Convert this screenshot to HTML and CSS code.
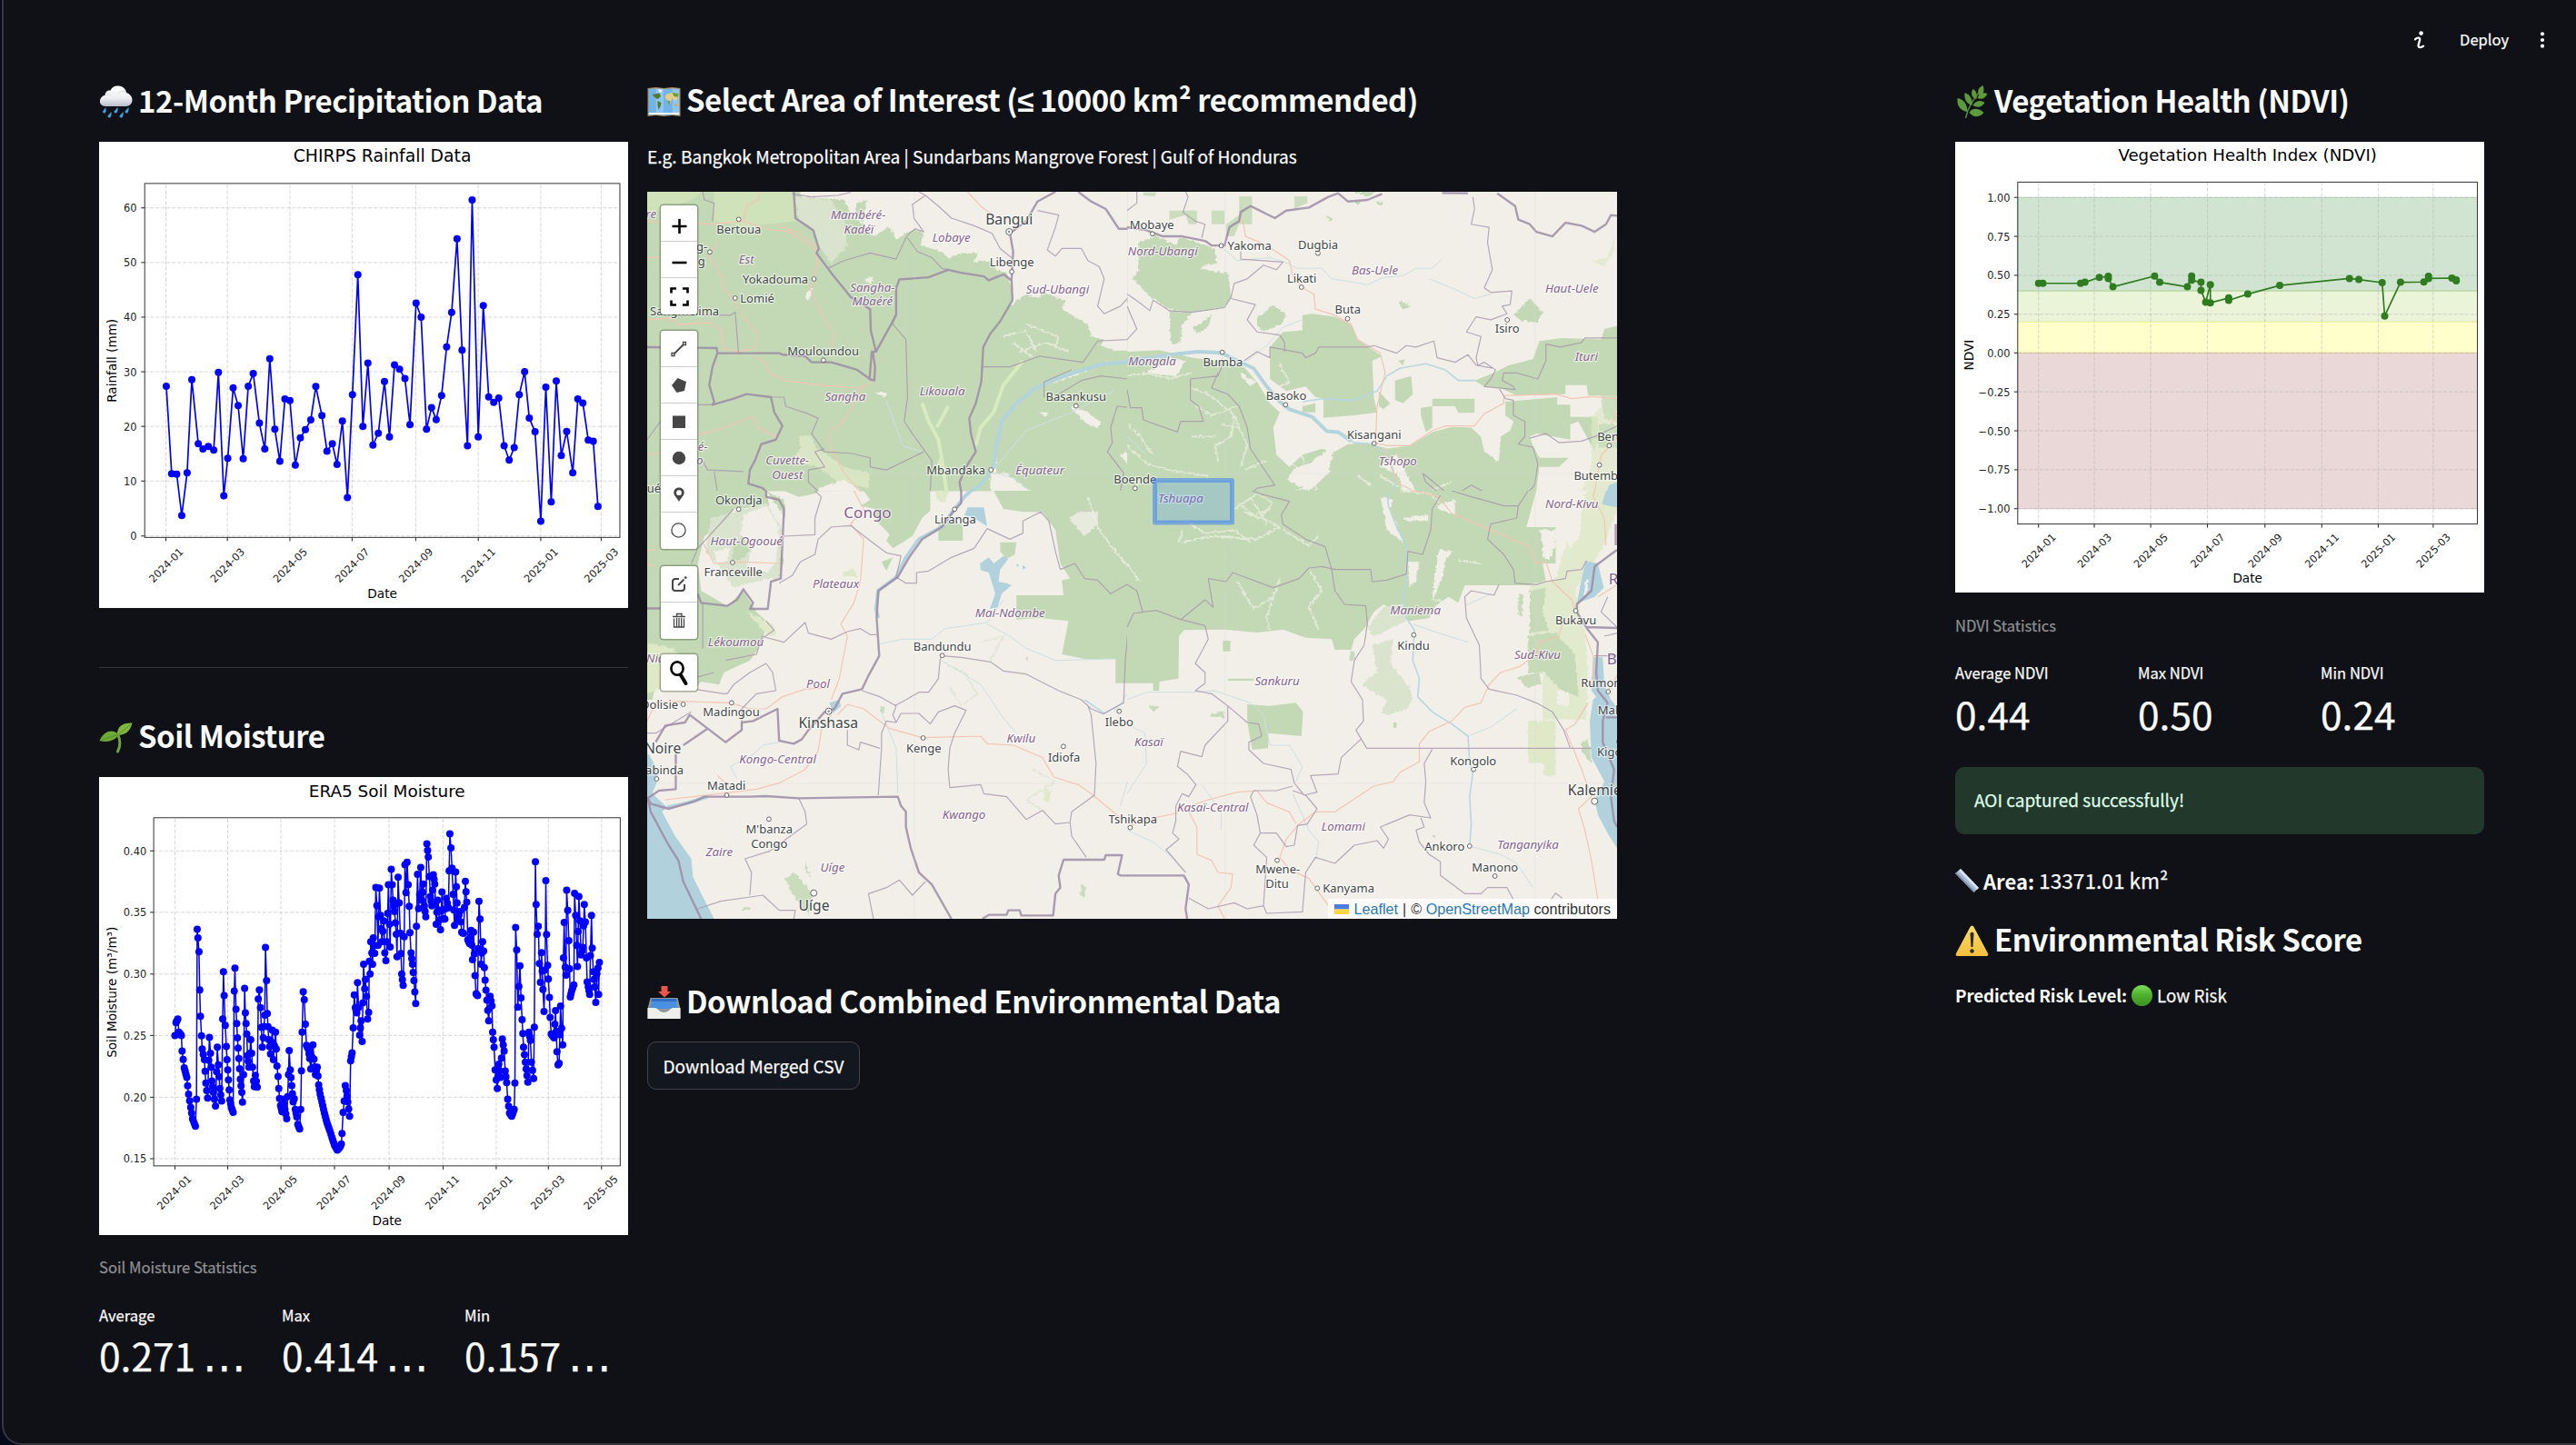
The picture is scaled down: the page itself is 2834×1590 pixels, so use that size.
FILE: index.html
```html
<!DOCTYPE html>
<html lang="en">
<head>
<meta charset="utf-8">
<title>Environmental Dashboard</title>
<link rel="stylesheet" href="styles.css">
</head>
<body>
<div class="window">
<header class="toolbar">
  <svg class="info" viewBox="0 0 12 20"><circle cx="7.6" cy="2.6" r="2.3"/><path d="M1 9.2C3 7.6 6.6 6.6 6.2 9.6C5.8 12 4.4 14.6 4.6 16.6C4.9 18.9 8 18.2 10 16.8"/></svg>
  <span class="deploy">Deploy</span>
  <svg class="dots" viewBox="0 0 6 18"><circle cx="3" cy="2.3" r="2.1"/><circle cx="3" cy="9" r="2.1"/><circle cx="3" cy="15.700" r="2.1"/></svg>
</header>
<main class="columns">
  <section class="col">
    <h3><svg class="emoji" viewBox="0 0 36 36"><defs><linearGradient id="cl" x2="0" y2="1"><stop offset="0" stop-color="#fff"/><stop offset=".6" stop-color="#eceef2"/><stop offset="1" stop-color="#b9bec9"/></linearGradient></defs><path fill="url(#cl)" d="M7 23C2 23 0 20 .5 16.500C1 13 4 11 6 11C6 7 9 5 12 5.500C14 1 18 0 21 .5C26 1 29 4 29.500 8C33 9 36 12 36 16C36 20 33 23 29 23Z"/><path d="M6 11C9 9 12 10 13 12M20 9C23 6 27 6 29.500 8" fill="none" stroke="#d4d7de" stroke-width="1"/><g fill="#3ba4e4"><path d="M7 24L3.500 28.500Q3.500 31 6 30.500Q7.500 29 7 24ZM20 24L16 28.500Q16 31 18.500 30.500Q20.500 29 20 24ZM32 24L28 28.500Q28 31 30.500 30.500Q32.500 29 32 24ZM13 29L9 33.500Q9 36 11.500 35.500Q13.500 34 13 29ZM26 29L22 33.500Q22 36 24.500 35.500Q26.500 34 26 29Z"/></g></svg><span>12-Month Precipitation Data</span></h3>
    <svg class="chart rain" id="rain" viewBox="0 0 582 513"></svg>
    <hr>
    <h3><svg class="emoji" viewBox="0 0 36 36"><path d="M20 15C23 21 23 28 20 34" fill="none" stroke="#6fa43c" stroke-width="3" stroke-linecap="round"/><path fill="#7fb73f" d="M19.500 16C19 6 26 2 36 2.500C34 11 29 16 19.500 16Z"/><path fill="#6ea935" d="M21 15.500C16 9 5 10 0 22C9 24.500 17 22 21 15.500Z"/><path d="M20 16L34 4M20 15.500L3 21" stroke="#4f8a26" stroke-width=".8"/></svg><span>Soil Moisture</span></h3>
    <svg class="chart soil" id="soil" viewBox="0 0 582 504"></svg>
    <p class="caption">Soil Moisture Statistics</p>
    <div class="metrics">
      <div><div class="label">Average</div><div class="value">0.271 <i>…</i></div></div>
      <div><div class="label">Max</div><div class="value">0.414 <i>…</i></div></div>
      <div><div class="label">Min</div><div class="value">0.157 <i>…</i></div></div>
    </div>
  </section>
  <section class="col">
    <h3><svg class="emoji" viewBox="0 0 36 36"><path fill="#b08a5a" d="M0 3L9 2L18 3L27 2L36 3V34L27 33L18 34L9 33L0 34Z"/><path fill="#6fb4ea" d="M1.200 4L9 3.200V32L1.200 33Z"/><path fill="#8cc6f2" d="M9 3.200L18 4V33L9 32Z"/><path fill="#6fb4ea" d="M18 4L27 3.200V32L18 33Z"/><path fill="#8cc6f2" d="M27 3.200L34.800 4V33L27 32Z"/><path fill="#4f7a2e" d="M5 10L13 8.500L14.500 12L11 15L9 14L7 12ZM11 17L15 19L14 23L12 27L11 22Z"/><path fill="#e3cf8a" d="M20 10L26 8L33 9L34 13L30 17L27 14L25 20L22 16L19 14Z"/><path fill="#6f9a3e" d="M27 8L34 9L33 13L29 12ZM22 17L25 17L24 22Z"/><path fill="#e2a24c" d="M30 20L33 21L32 23L29.500 22.500Z"/><path fill="#eef6fb" d="M12 4L16 5L15 8L12 7ZM1.200 30L34.800 30V32L1.200 32Z"/></svg><span>Select Area of Interest (<i>≤</i> 10000 km² recommended)</span></h3>
    <p class="hint"><span>E.g. Bangkok Metropolitan Area | Sundarbans Mangrove Forest | Gulf of Honduras</span></p>
    <div class="map">
      <svg class="tiles" viewBox="0 0 1067 800">
        <defs><filter id="rough" x="-5%" y="-5%" width="110%" height="110%"><feTurbulence type="fractalNoise" baseFrequency=".09" numOctaves="3" seed="4"/><feDisplacementMap in="SourceGraphic" scale="14" xChannelSelector="R" yChannelSelector="G"/></filter></defs>
        <rect width="1067" height="800" fill="#f2efe9"/>
        <svg x="0" y="0" width="528.500" height="329.500" viewBox="34 423 1478 987" preserveAspectRatio="none">
          <rect x="34" y="423" width="1490" height="990" class="wood"/>
          <path class="land" d="M500 400L510 440L640 450L660 500L700 530L730 570L780 540L800 580L860 545L885 560L875 600L940 620L960 640L1000 625L1050 625L1040 655L1085 650L1110 680L1140 690L1160 760L1150 800L1200 760L1240 780L1250 750L1310 780L1310 810L1390 860L1400 900L1440 910L1430 930L1480 950L1540 945V400Z"/>
          <path class="sparse" d="M490 440L600 450L640 520L650 600L600 660L560 600L540 540L500 520Z"/>
          <path class="pale" d="M240 423H485L490 520L400 530L340 540L240 520ZM34 423H200L180 445L34 500Z"/>
          <path class="scrub" d="M540 1230L500 1225L505 1270L480 1310L560 1330L620 1380L715 1400L720 1350L640 1330L590 1290L555 1270Z" opacity=".8"/>
          <path class="land" d="M1340 1130L1370 1140L1400 1160L1430 1180L1420 1200L1390 1190L1350 1150ZM1240 1150L1268 1150L1260 1165ZM1370 1020L1270 1060L1350 1020L1470 975ZM1090 1350L1140 1350L1200 1400L1260 1430L1090 1430ZM1110 1290L1095 1340L1105 1350ZM1530 1340L1490 1290L1530 1270Z"/>
          <path class="land" d="M520 770L530 750L545 740L530 780ZM735 1085L770 1085L765 1100ZM700 710L730 705L720 730ZM560 1400L640 1370L680 1400L700 1430H560Z"/>
          <path class="wood rough" d="M1210 770L1320 780L1310 820L1260 810ZM1160 860L1200 850L1280 880L1340 870L1380 900L1350 930L1280 900L1250 930L1180 890ZM680 460L710 450L700 520L670 500Z"/>
          <path class="specks" d="M1130 900L1200 880L1230 950M1180 950L1260 920L1330 950M1200 860L1300 900L1290 940M1160 920L1220 970"/>
          <path class="valley" d="M880 1120L900 1180L930 1240L940 1300L955 1410M960 1130L925 1200M940 1300L920 1350M1045 1260L1060 1200L1100 1150L1130 1060L1190 980"/>
          <path class="river wide" d="M1520 983L1440 990L1370 1012L1290 1040L1230 1070L1170 1120L1125 1180L1108 1260L1100 1330L1060 1390L1010 1430"/>
          <path class="stream" d="M1110 1350L1170 1370L1210 1410M1100 1340L1200 1210L1340 1150L1470 1080M770 1110L800 1200L820 1260L880 1280"/>
          <path class="road" d="M375 423L380 445L340 470L330 520L240 530L34 520M250 590L225 640L260 690L270 740L300 780L340 850L375 890L365 940L315 950L270 940L260 880L230 855L130 860L100 840L34 845M365 965L400 990L410 1020L460 1045L560 1060L690 1070L725 1050M330 520L400 545L470 555L550 610L560 660L535 740L580 850L610 890L600 960M430 530L500 560L560 605M700 1060L650 1160L630 1190L595 1210L600 1270L640 1350L680 1400L690 1410M190 1225L260 1205L360 1165L375 1200L430 1230M34 1290L100 1280L190 1225M34 640L75 640M1020 423L1060 470L1110 510"/>
          <path class="state" d="M480 430L540 440L620 435L660 425M870 423L890 435L850 465L855 510L885 555L860 545L840 560L830 575L800 645L720 625L640 650L590 675M835 575L865 620L910 640L940 675L960 680M890 435L930 470L970 510L1040 535L1095 560L1120 610L1155 640M1235 485L1300 500L1290 540L1265 615L1290 635L1310 610L1370 610L1390 650L1425 670L1440 710L1420 800L1440 825L1490 800L1520 765M1512 780L1540 880L1512 910L1420 915L1375 985L1240 965L1150 1000L1065 1000M795 830L790 860L830 910L835 1100L825 1180L850 1220L910 1310L905 1410M190 1125L240 1125M415 1100L455 1100L460 1130L530 1155L560 1170L540 1220L580 1280L660 1285L720 1300L720 1330L770 1340L885 1280M205 423L210 450L240 460L235 520M200 830L290 830L305 820L315 955M1520 1135L1480 1130L1460 1200L1465 1250L1450 1280L1500 1350L1490 1410M1255 1100L1255 1050L1340 1010M1300 1090L1370 1045L1430 1030L1512 1040M34 1240L75 1180M200 1300L220 1340L330 1345M580 1270L550 1280L580 1330L530 1340L530 1380L560 1410M240 1345L250 1410M1520 440L1550 480"/>
          <path class="country" d="M485 423L490 510L545 550L562 610L555 625L600 690L660 770L720 810L722 880L738 950L725 950L718 1040L733 1045L735 1000L728 950M738 950L800 830L800 740L810 712L900 705L960 680L1000 690L1070 702L1085 715L1130 695L1155 715L1158 780L1120 850L1090 890L1068 935L1062 1050L1045 1120L1025 1170L1030 1220L1045 1280L1015 1330L995 1380L1000 1412M725 1045L680 1010L600 985L540 985L520 965L450 960L440 955L250 955L248 938L34 935M250 955L235 1000L225 1060L240 1115L235 1125L300 1105L340 1090L415 1100L425 1150L450 1195L430 1240L385 1255L365 1310L350 1340L345 1385L390 1400L400 1412M1155 715L1160 620L1150 560L1200 520L1235 455L1290 423M1360 423L1400 455L1445 480L1485 545L1520 545"/>
        </svg>
        <svg x="528" y="0" width="539" height="329.500" viewBox="0 93 1509 987" preserveAspectRatio="none">
          <path class="wood rough" d="M35 260L90 240L150 268L160 245L195 250L270 280L275 330L230 335L230 350L310 360L320 440L300 475L200 490L130 480L70 440L35 400L15 380L35 350ZM130 485L200 490L170 530L165 590L135 595ZM205 540L260 500L250 540L215 560ZM400 510L450 465L490 500L480 525L420 555L400 530ZM840 450L870 470L860 480L840 475ZM610 170L635 180L625 190ZM1190 500L1240 445L1280 490L1265 525L1210 515ZM765 125L790 125L780 140ZM700 125L720 125L710 140ZM700 93L770 93L740 108Z"/>
          <path class="wood" opacity=".85" d="M130 155H215V200H190L180 170L130 185ZM260 155H300V200H260ZM345 108H385V200H345L330 240H305V200L345 170ZM515 108H555V130L515 150ZM50 95L90 95L85 108L50 105Z"/>
          <path class="wood" d="M440 605L480 555L540 550L540 500L570 495L640 505L690 530L710 580L785 635L755 650L760 770L770 820L700 830L605 838L605 775L580 770L550 735L490 750L440 710ZM775 750L810 790L790 810L775 800ZM825 715L875 700L880 760L850 790L825 780ZM940 775L1070 775V822H1020L1010 800H940ZM905 805L940 800L940 870L920 885L905 830ZM835 650L855 645L850 665ZM540 800L580 790V820H540Z"/>
          <path class="wood" d="M0 620L100 615L200 640L300 655L360 670L400 720L440 790L470 820L450 870L460 960L500 1000L540 960L600 940L640 950L680 925L740 920L800 940L870 930L940 885L1000 868L1060 870L1090 900L1100 950L1145 980L1150 900L1180 880L1200 920L1235 930L1260 1000L1260 1090H0Z"/>
          <path class="wood" d="M1070 715L1130 690L1175 665L1250 645L1270 585L1340 575L1460 580L1470 545L1509 535V765H1420L1415 730H1350V760L1200 765L1150 740L1100 735ZM1165 785L1325 770V795L1365 795V835H1450L1450 900L1440 950L1390 850L1365 860V910L1260 890L1240 900L1250 930L1270 970L1360 970L1330 1000L1270 1000L1260 1080L1180 880L1190 850L1165 830Z"/>
          <path class="scrub" d="M1430 830L1509 760V1080H1400L1430 1000ZM1430 320L1480 310L1500 240V290L1470 340Z" opacity=".7"/>
          <path class="wood rough" d="M1450 860H1509V935H1450ZM1455 750H1509V850L1470 840Z" opacity=".7"/>
          <path class="land" d="M1090 895L1150 895L1140 985L1110 950ZM780 1000L830 960L900 1100H860L830 1020ZM130 640L180 650L150 700L60 690ZM350 690L400 720L380 735L350 700ZM470 840L500 830L490 900L540 910L520 960L500 990L460 940ZM520 1000L560 990L620 940L640 930L620 1020L560 1080L490 1040Z"/>
          <path class="specks" d="M0 700L60 690L130 710L200 690M200 740L250 760L330 830L320 900L270 930L280 980M0 930L60 990L130 1010L250 1030M330 830L370 930L350 1000M470 960L520 1000L590 1000L580 1080M540 960L560 1060L520 1080M600 900L620 960L600 990M710 1030L750 1060M440 750L500 720L470 660M780 1030L860 1080M1000 1050L940 1075M270 900L200 900M360 1010L430 980M210 800L260 830L340 800M290 860L350 870M0 860L40 900L80 960M40 1040L20 1080"/>
          <path class="lake" d="M1509 1050L1485 1060L1465 1110V1090H1509Z"/>
          <path class="river wide" d="M0 650L80 640L150 628L220 620L290 624L330 645L390 675L430 735L470 785L500 810L570 835L615 882L650 885L690 915"/>
          <path class="river" d="M650 885L700 920L760 925L800 960L820 1010L825 1060L815 1090M540 785L600 775L700 780L770 750L800 700L840 675L920 660L980 680L1020 715L1075 715"/>
          <path class="stream" d="M290 275L340 320L440 310L500 330L520 345L600 345L630 380L690 390L740 400L790 375L850 370L890 345L940 345L970 315M930 380L1000 410L1070 445L1120 430M370 650L430 600L480 540L540 515M0 900L60 960"/>
          <path class="road" d="M355 180L365 240L430 270L500 320L510 370L540 410L575 430L580 480L640 500L690 530L710 580L780 625L795 690L770 800L765 920L800 930L870 930L940 880L980 865L1070 865L1100 825L1160 790L1160 765L1320 760L1370 775L1430 768L1509 775M790 935L830 1050L900 1090M1509 890L1485 935L1460 960L1440 1080M1509 820L1490 860"/>
          <path class="state" d="M0 155L30 130L30 93M180 93L188 110L172 160L210 190L240 200L230 245M0 430L40 460L70 485L80 450L130 485L200 490L300 475L320 440L330 395L370 380L420 335L460 350L480 325L350 315L350 290M320 445L395 465L370 515L400 555L470 565L485 590L485 620M0 580L30 545L0 470M360 650L400 620L440 640L440 605L540 625L550 640L580 625L590 605L740 605L760 600L830 625L860 600L890 605L945 585L955 640L1010 655L1050 630L1075 665L1130 675M1065 110L1070 150L1060 200L1115 210L1110 260L1125 350L1100 410L1120 425L1185 420L1180 465L1155 470L1170 495L1120 515L1075 505L1045 555L1090 570L1075 640L1080 665L1100 655L1135 680L1120 710L1100 735L1195 745L1190 735L1155 715L1160 690L1200 690L1265 710L1290 650L1290 595L1335 605L1400 590L1410 575L1509 575M1145 740L1165 775L1190 780L1190 830L1225 850L1225 900L1205 925L1250 935L1265 990L1255 1060L1230 1090M1240 905L1290 890L1330 920L1400 915L1440 900L1509 865M0 745L10 805L45 805L50 845L155 885L165 850L235 850L220 800L195 780L195 710L280 700L295 660M260 740L310 760L345 800L370 870L380 940L455 1060L400 1070L380 1090M280 690L260 740M910 1020L1000 1100L1060 1060L1130 1100M910 1020L920 1050L965 1090"/>
          <path class="country" d="M0 210L60 220L110 240L170 240L240 255L260 270L300 270L315 210L345 190L350 160L380 140L455 180L490 155L560 145L620 110L650 98L680 125L740 120L785 100M970 97L1050 98M1140 98L1195 140L1205 185L1240 200L1260 225L1310 240L1350 195L1400 205L1440 225L1475 200L1490 170L1509 172"/>
        </svg>
        <svg x="0" y="329" width="528.500" height="471" viewBox="34 0 1478 1413" preserveAspectRatio="none">
          <path class="wood" d="M34 0H400L410 50L300 60L250 120L210 150L190 240L200 330L280 380L330 330L370 400L400 430L390 500L350 560L270 600L255 640L200 630L180 655L100 660L34 600ZM300 180L340 190L335 230L295 225ZM440 180L455 230L440 290L425 250Z"/>
          <path class="sparse" d="M230 90L330 60L400 40L450 130L440 290L400 290L300 320L250 240L215 200Z"/>
          <path class="land" d="M330 80L400 50L440 120L430 240L400 270L340 250L360 180L320 150ZM240 200L290 190L280 230L250 240ZM370 300L400 310L390 330Z"/>
          <path class="wood rough" d="M300 170L330 150L350 200L320 230L295 225ZM400 0L455 30L460 90L440 60Z"/>
          <path class="scrub" d="M34 500L110 520L160 560L100 600L34 640ZM340 400L420 440L430 480L400 470Z"/>
          <path class="wood" d="M700 0H905V65L880 90L850 150L790 190L770 165L780 145L740 100L735 60L690 50L720 30ZM455 0H560L550 10L500 20ZM930 100L1005 110V165H930ZM1100 0H1512V635H1475V555L1380 555L1310 540L1330 430L1240 420L1170 425V345H1315L1310 295L1335 290L1305 240L1290 130L1250 70L1190 70L1130 60ZM1120 170L1170 170L1165 210L1140 225L1120 200ZM755 235L790 220L770 265ZM34 650L60 640L50 690L34 690Z"/>
          <path class="land" d="M1360 70H1420V110L1380 150L1330 90ZM600 0H690L660 20Z" opacity=".8"/>
          <path class="scrub" d="M635 270L670 255L680 285L640 285ZM34 560L80 590L100 640L34 670ZM920 0H960L950 40L925 30ZM1255 985L1275 990L1270 1030L1255 1025Z"/>
          <path class="wood rough" d="M485 1260L530 1310L545 1350L530 1400L480 1330L460 1280ZM520 1220L540 1280L520 1250ZM1370 1300L1385 1310L1380 1345L1365 1335ZM750 715L765 715L762 735L750 730ZM1195 550L1205 548L1203 565ZM330 1375H350V1383H330Z" opacity=".85"/>
          <path class="specks faint" d="M950 570L1010 600L1050 670L1000 710L960 640M1060 500L1130 480L1090 560M1220 920L1290 960L1200 1020L1260 1060"/>
          <path class="specks" d="M1390 20L1420 120L1460 180L1550 300"/>
          <path class="lake" d="M34 860L60 910L68 950L50 1000L95 1045L80 1060L120 1140L170 1215L175 1275L210 1350L240 1413H34ZM1058 240L1085 220L1100 240L1130 215L1145 225L1120 260L1115 300L1140 305L1155 312L1125 340L1112 385L1088 390L1105 340L1085 270L1060 262ZM1020 55L1070 55L1080 118L1040 90L1010 80ZM595 700L625 690L630 710L605 735ZM1170 240L1178 245L1172 252ZM1190 245L1200 255L1188 260Z"/>
          <path class="river wide" d="M1060 -30L1010 20L980 60L940 120L870 160L830 220L800 285L745 330L738 390L745 420M95 1045L160 1030L220 1010"/>
          <path class="river" d="M1380 690L1440 735L1500 700"/>
          <path class="stream" d="M750 505L820 490L910 490L950 455L1080 435L1130 360M1080 440L1150 480L1200 520L1290 560L1475 555M750 720L800 850L805 1000M940 560L1060 640L1130 750L1170 800M310 950L290 910L360 870L390 840L440 830M1512 670L1470 730M1490 1040L1512 960L1560 900"/>
          <path class="road" d="M670 0L700 60L660 110L700 160L690 300L670 370L630 440L650 480L625 620L600 690M34 760L60 700L130 695L290 700L350 720L400 720L450 680L520 655L590 650M600 740L570 790L560 860L520 920L440 965L370 985L300 995L90 1020M250 940L290 980M620 740L650 705L700 720L780 785L880 815L1060 810L1080 835L1160 840L1250 880L1285 945L1360 970L1400 1000L1490 1080M34 200L60 190M190 140L240 240L330 235L440 240M34 240L60 250"/>
          <path class="state" d="M440 305L480 280L505 235L550 210L560 160L600 120L660 115L720 165L770 205L815 215L800 285L830 305H863V270L900 265L970 220L1040 190L1080 125L1150 160L1190 140V100L1245 70L1270 100L1290 200L1305 260L1350 240L1380 290L1420 295L1460 340L1510 310L1530 315L1558 370L1560 405L1515 440L1505 560L1500 700L1440 735M550 0L570 20L550 90L550 145L455 150M34 390H190M205 370L205 520M385 480L455 500L520 435L530 470L600 490L650 465L690 455L720 475H740M400 430L425 460L385 490L370 540L275 560M180 655L270 670L280 670L300 640L350 600L400 570L420 600L430 660L370 670L325 720L325 790M695 660L750 680L800 710L790 740L800 765L770 760L755 800L755 850L745 1005M795 710L830 690L870 665L900 665L930 620L935 560M800 765L815 735L870 735L905 770L930 730L980 710L1015 725L980 800L965 850L960 920L965 980L1060 970L1070 1000L1140 1010L1200 1085L1250 1055L1290 1100L1335 1095L1340 1060L1410 1005L1415 900L1400 740L1390 710M935 560L940 545L1000 550L1090 565L1130 595L1200 605L1300 660L1370 690L1400 720L1440 738M1335 1095L1340 1140L1385 1210M500 1015L520 1060L525 1100L410 1190L335 1215L355 1260L350 1335M190 1380L260 1355L390 1335L440 1385L490 1385L485 1413M730 1413L715 1330L770 1310L810 1285L850 1335L890 1290M750 850L690 830L685 855L650 840L650 790M34 800L60 800L170 730M240 600L100 640M300 60L190 190L170 240"/>
          <path class="country" d="M1000 0L1000 40L975 70L940 120L880 160L840 220L805 285L745 330L740 420L748 545L715 610L695 655L635 670L610 720L580 730L530 790L510 820L485 835L440 825L435 720L360 760L325 765V790L275 830L220 785L165 740L150 765L90 775L60 830M400 0V20L440 30L455 60L445 290L415 300L405 390L350 390L360 370L330 325L310 360L280 380L200 370L190 340M34 388H75M220 785L145 840M122 870V985L70 990L36 1015L45 1060L100 1170L130 1220L145 1290L200 1413M36 1015L45 1033L100 1050L180 1025L210 1010L350 1010L400 1008L500 1015L805 1010L815 1040L830 1060V1110L845 1180L870 1260L910 1300L970 1413M1065 1413L1085 1400L1140 1400L1145 1385H1180L1185 1402H1283L1290 1330L1305 1310L1300 1270L1315 1218H1440L1445 1203H1495L1482 1265L1490 1270H1520"/>
        </svg>
        <svg x="528" y="329" width="539" height="471" viewBox="0 0 1509 1413" preserveAspectRatio="none">
          <path class="wood" d="M0 0H1260L1230 120L1320 120L1320 240L1280 240L1290 300L1235 312H1040L1020 370L990 350L950 380L930 420L870 430L790 375L760 400L735 450L700 490L690 525L640 525L630 490L550 485L480 458L400 468L300 458L175 460L160 480L158 620L100 630L98 660H80V635H0Z"/>
          <path class="scrub" d="M1400 0L1509 0V60L1470 180L1380 330L1410 470L1420 600L1415 755H1280V600H1240V310L1320 290Z" opacity=".8"/>
          <path class="wood rough" d="M1235 480L1290 470L1320 470L1380 540L1390 680L1340 660L1285 600H1235ZM1200 615L1270 600L1275 640L1230 650ZM1205 340L1220 340L1218 415L1205 410ZM260 735L300 730L300 750L255 745ZM65 710L100 710L85 730ZM940 1135L955 1138L945 1145ZM685 530H700V560L685 562ZM1400 830L1420 820L1430 900L1400 860ZM1240 330L1290 320L1280 400L1300 460L1240 470Z" opacity=".9"/>
          <path class="wood" d="M370 705L440 710L520 700L542 730L537 810L435 800V850L385 855L370 760ZM295 495H318V530H295ZM310 620H390V627H310ZM820 765H830V782H820Z"/>
          <path class="sparse" d="M755 510L820 490L810 570L870 650L880 690L860 720L800 742L780 735L800 690L720 640L770 600ZM740 450L790 385L850 370L860 430L760 480Z"/>
          <path class="scrub" d="M1235 760H1320V940H1283V900H1235Z"/>
          <path class="land" d="M1335 -20H1420L1400 60L1395 150L1365 190L1335 110ZM1270 130H1320V180L1300 230L1280 220V180ZM1325 660L1360 665V710L1325 705ZM865 235L900 235L890 300L870 315ZM960 195L1005 200L980 225L970 290L940 360L950 250ZM780 20L820 30L810 60L850 170L800 130ZM850 90L930 80V100L860 100ZM950 50L1010 30L1010 80L960 60Z"/>
          <path class="specks" d="M330 60L400 10L450 40L410 90L360 70M170 170L260 150L400 160L470 120L420 90M340 300L390 390L450 350L430 420L440 460M450 350L470 290M560 380L600 330L560 260M560 380L590 460M0 240L40 300M940 360L1000 370M840 0L930 10L1000 70M1020 230L1090 240M480 130L560 180L590 150M170 130L160 170M180 100L240 140L330 130L380 170M340 40L390 80L440 60M380 20L430 110"/>
          <path class="lake" d="M1462 45L1475 0H1509V55ZM1413 232L1450 240L1468 320L1440 350L1385 372L1400 290ZM1435 550L1465 550L1470 640L1490 690L1509 715V1180L1480 1130L1450 1070L1440 1020L1470 960L1430 880L1425 760L1435 690L1445 680L1430 660Z"/>
          <path class="land" d="M1410 300L1420 290L1418 340L1408 345Z"/>
          <path class="river" d="M800 0L805 50L830 120L860 180L860 300L848 350L860 420L885 460L880 560L900 620L895 680L940 730L1000 770L1050 810L1055 900L1065 930L1055 1010L1060 1100L1055 1170"/>
          <path class="stream" d="M1060 1175L1150 1200L1200 1230L1250 1310M0 690L60 665L200 665L270 660L380 700L420 740L440 840L500 840L540 910L520 960M0 1000L60 900L55 800L0 770M0 1120L80 1160L150 1220M230 970L290 1060L290 1120M510 1000L560 1120L590 1160L580 1220M880 440L960 470L1050 500M1200 720L1120 780L1050 810M1040 380L1120 340"/>
          <path class="road" d="M880 0L960 20L1000 75L1110 125L1240 185L1260 240L1290 235L1310 300L1370 360L1380 400M1440 0L1435 20L1470 90L1475 180M1340 440L1330 480L1270 500L1260 540L1210 580L1150 600L1115 640L1090 700L1040 715L1000 760L930 795L900 835L900 895L840 930L820 960L760 975L640 1060L580 1060L530 1100L490 1150L470 1210L500 1250L560 1280L620 1370M0 1110L60 1085L150 1065L170 1050L250 1020L340 995L400 990L430 1030L500 1060L520 1100M190 1060L215 1110L215 1200L260 1220L280 1260L325 1265L320 1310L280 1370L300 1413M1430 650L1440 560L1410 470M1420 700L1380 770L1350 790L1400 920L1430 1010L1390 1050L1410 1120L1430 1220L1450 1350M1450 350L1509 310M1509 610L1480 660"/>
          <path class="state" d="M385 0L410 10L500 35L475 80L480 110L550 160L610 185L630 260L640 330L670 375L735 380L740 440L730 510L700 560L690 630L725 690L728 760L705 790L738 850H1430M0 310L30 330L48 400L90 395L165 425L240 360L265 385L250 290L305 300L325 270L450 320L530 290L560 255L600 250L640 260H750L755 300L800 295L860 275L865 200L910 210L935 130L940 60L965 15M0 450L20 405L50 400M165 425L240 445L250 490L210 570L240 600L240 635L210 660L260 670L310 710L370 765L405 770L415 810L375 830L375 855L420 900L505 920L515 965L545 1005L585 995L565 940L650 935L660 880L720 820M310 710V760L240 840L230 878L165 860L155 910L185 935L212 970L190 1010L170 1000L150 1040L150 1090L140 1130L160 1150L120 1185L180 1260M510 990L550 1005L585 1050L555 1100L525 1105L515 1170L490 1175L460 1130L410 1130L400 1070L380 1010L390 990L460 990L510 975M410 1130L390 1170L430 1210L420 1370L370 1380L330 1360L250 1380L190 1345M420 1370L430 1395L540 1390L550 1260L580 1210L640 1230L700 1170L770 1155L790 1180L805 1150L780 1110L870 1070L935 1080L915 1030L920 960L915 900L940 853M905 1080L915 1110L890 1120L900 1160L930 1200L965 1225L965 1270L1040 1330L1090 1330L1110 1310L1170 1310L1190 1350M1305 1350L1320 1328L1340 1345M1235 0L1205 50L1160 50L1130 40M1205 50L1200 90L1120 110L1110 160L1160 210L1190 260L1195 305L1260 310L1290 300L1350 290L1355 265L1400 260L1415 230M1145 310L1130 345L1060 330L1040 350L1045 420L1085 510L1090 620L1115 655L1200 675L1260 700L1310 730L1345 790L1365 850M1130 40L1060 20L1000 0M1470 480L1509 470M1440 545H1509M1480 350L1460 400L1509 450"/>
          <path class="country" d="M0 1270H175L190 1300L180 1380L185 1413M1509 195L1440 250L1430 330L1385 375L1385 400L1420 460L1450 500L1445 600L1450 660L1480 700L1465 760L1465 830L1500 920L1490 1010L1500 1090L1509 1110M1415 450L1509 453M1475 748H1509M1505 110V180"/>
        </svg>
        <g class="grid"><path d="M294 0V800M636 0V800M977 0V800M0 310H1067M0 651H1067"/></g>
        <g id="labels"></g>
        <rect class="aoi" x="558.500" y="317.500" width="85" height="46.500"/>
      </svg>
      <div class="controls">
        <div class="bar">
          <button><svg viewBox="0 0 40 40"><path class="k3" d="M12.500 23H28.500M20.500 15V31"/></svg></button>
          <button><svg viewBox="0 0 40 40"><path class="k3" d="M12.500 23H28.500"/></svg></button>
          <button><svg viewBox="0 0 40 40"><path class="k3" d="M11.500 16.500V11.500H17M24 11.500H29.500V16.500M29.500 24.500V29.500H24M17 29.500H11.500V24.500"/></svg></button>
        </div>
        <div class="bar draw">
          <button><svg viewBox="0 0 40 40"><path d="M14 26L26 14" class="g2"/><path class="g1" fill="#fff" d="M12 24.500H15V27.500H12ZM24.500 12.500H27.500V15.500H24.500Z"/></svg></button>
          <button><svg viewBox="0 0 40 40"><path class="gf" d="M18.500 12L28 16L26 26L17.500 28L12 20Z"/></svg></button>
          <button><svg viewBox="0 0 40 40"><path class="gf" d="M13 13.500H27V27H13Z"/></svg></button>
          <button><svg viewBox="0 0 40 40"><circle class="gf" cx="20" cy="20" r="7.200"/></svg></button>
          <button><svg viewBox="0 0 40 40"><path class="gf" fill-rule="evenodd" d="M20 12.500C16.800 12.500 14.300 14.800 14.300 18C14.300 21.500 18 24 20 28C22 24 25.700 21.500 25.700 18C25.700 14.800 23.200 12.500 20 12.500ZM20 15.300A2.900 2.900 0 1 1 20 21.100A2.900 2.900 0 1 1 20 15.300Z"/></svg></button>
          <button><svg viewBox="0 0 40 40"><circle class="g1" cx="19.500" cy="19.500" r="7.600"/></svg></button>
        </div>
        <div class="bar edit">
          <button><svg viewBox="0 0 40 40"><path class="g2 b" d="M20 14H16Q13 14 13 17V24Q13 27 16 27H23Q26 27 26 24V20"/><path class="g2 b" d="M19 21L25.500 14.500"/><circle class="gf" cx="27.200" cy="12.600" r="1.400"/></svg></button>
          <button><svg viewBox="0 0 40 40"><path class="g1 b" d="M13 15.500H27M17.500 15V12.500H23V15M14.500 17.500V27H25.500V17.500M17.500 17V27M20 17V27M22.700 17V27"/></svg></button>
        </div>
        <div class="bar search">
          <button><svg viewBox="0 0 40 40"><ellipse cx="18" cy="15.500" rx="6.600" ry="7.200" class="s1"/><path d="M22 23L27.500 32" class="s2"/></svg></button>
        </div>
      </div>
      <div class="attribution"><svg viewBox="0 0 16 11"><path fill="#4c7be1" d="M0 0H16V5.500H0Z"/><path fill="#ffd642" d="M0 5.500H16V11H0Z"/></svg><a>Leaflet</a><span class="sep">|</span><span>© <a>OpenStreetMap</a> contributors</span></div>
    </div>
    <h3 class="dl"><svg class="emoji" viewBox="0 0 36 36"><path fill="#e8584a" d="M15 0H22V6H25.500L18.500 12.500L11.500 6H15Z"/><path fill="#8f969c" d="M3 13H33L36 25V36H0V25Z"/><path fill="#4a8fe0" d="M4.500 14H31.500L33 25H3Z"/><path fill="#2f6fc4" d="M4.500 14H31.500L32 17H4Z"/><path fill="#eeeeec" d="M0 24H8C11 24 13 29 18 29C23 29 25 24 28 24H36V36H0Z"/></svg><span>Download Combined Environmental Data</span></h3>
    <button class="download"><span>Download Merged CSV</span></button>
  </section>
  <section class="col">
    <h3><svg class="emoji" viewBox="0 0 36 36"><path d="M11 36C13 25 19 15 29 4" fill="none" stroke="#4f8a3a" stroke-width="1.600"/><g fill="#5c9a3c"><path d="M30 0C24 3 23 8 27 12C31 9 32 5 30 0ZM19 4C16 9 18 14 23 15C24 10 23 6 19 4ZM10 8C9 15 12 20 18 22C19 15 16 10 10 8ZM2 14C1 23 6 28 13 29C13 21 9 15 2 14ZM35 9C29 7 25 10 24 14C29 16 33 14 35 9ZM32 19C26 15 21 18 19 22C24 25 29 24 32 19ZM31 30C25 24 17 25 15 30C20 36 27 35 31 30Z"/></g></svg><span>Vegetation Health (NDVI)</span></h3>
    <svg class="chart ndvi" id="ndvi" viewBox="0 0 582 496"></svg>
    <p class="caption cap-ndvi">NDVI Statistics</p>
    <div class="metrics ndvi-m">
      <div><div class="label">Average NDVI</div><div class="value">0.44</div></div>
      <div><div class="label">Max NDVI</div><div class="value">0.50</div></div>
      <div><div class="label">Min NDVI</div><div class="value">0.24</div></div>
    </div>
    <div class="alert"><span>AOI captured successfully!</span></div>
    <p class="area"><svg viewBox="0 0 26 26"><path fill="#a9b9cf" d="M6 0L26 21L20.500 26L0 5Z"/><path fill="#dbe5f1" d="M6 0L26 21L24 22.800L4 2Z"/><path fill="#7b8ba3" d="M1.500 4L22 25L20.500 26L0 5Z"/></svg><b>Area:</b> <span>13371.01 km²</span></p>
    <h3 class="risk"><svg class="emoji" viewBox="0 0 36 36"><defs><linearGradient id="wa" x2="0" y2="1"><stop offset="0" stop-color="#f8dc6a"/><stop offset="1" stop-color="#f5bf3b"/></linearGradient></defs><path fill="url(#wa)" d="M18 1.500Q19.300 1.500 20 3L35.500 32Q36.500 35 34 35H2Q-.5 35 .5 32L16 3Q16.700 1.500 18 1.500Z"/><path fill="#2d2a1c" d="M16 10Q18 7.500 20 10L19 25H17Z"/><circle cx="18" cy="29.500" r="2.200" fill="#2d2a1c"/></svg><span>Environmental Risk Score</span></h3>
    <p class="level"><b>Predicted Risk Level:</b><i class="dot"></i><span>Low Risk</span></p>
  </section>
</main>
</div>
<script src="app.js"></script>
</body>
</html>
```

FILE: styles.css
```css
* { box-sizing: border-box; }
body { margin: 0; height: 1590px; overflow: hidden; background: #060a1c; color: #fafafa; font-family: "Noto Sans CJK SC", sans-serif; }
h3, p { margin: 0; font-weight: 400; }
button { font: inherit; color: inherit; padding: 0; margin: 0; border: 0; display: block; }
.window { height: 1590px; margin-left: 2px; padding-left: 105px; background: #0f1116; border-left: 2px solid #36373d; border-bottom: 2px solid #36373d; border-bottom-left-radius: 22px; }
.toolbar { height: 86px; padding: 34px 34px 0 0; display: flex; justify-content: flex-end; align-items: flex-start; }
.info { width: 12px; height: 20px; margin-right: 38px; fill: #fafafa; }
.info path { fill: none; stroke: #fafafa; stroke-width: 2.400; stroke-linecap: round; }
.deploy { font-size: 16.500px; line-height: 24px; margin: -3px 34px 0 0; }
.dots { width: 6px; height: 18px; margin-top: 1px; fill: #fafafa; }
.columns { display: grid; grid-template-columns: 582px 1418px 582px; gap: 21px; }
.col { display: flex; flex-direction: column; align-items: flex-start; }
.deploy, .label, .caption, .hint, .download, .alert, .area span, .level span, .value { -webkit-text-stroke: .25px currentColor; }
h3 { height: 48px; line-height: 50px; font-size: 33px; font-weight: 700; letter-spacing: -.47px; display: flex; align-items: center; gap: 6px; white-space: nowrap; margin-bottom: 22px; }
h3 i { font-family: "Noto Sans", sans-serif; font-style: normal; }
.emoji { width: 37px; height: 36px; margin-top: 4px; flex: none; }
.chart { display: block; width: 582px; background: #fff; font-family: "DejaVu Sans", sans-serif; }
.rain { height: 513px; }
.soil { height: 504px; }
.ndvi { height: 496px; }
.chart .axis { font-size: 13.600px; }
.chart .tick { font-size: 11.400px; fill: #222; }
.chart .gridline { stroke: #b0b0b0; stroke-opacity: .5; stroke-dasharray: 4 2; stroke-width: 1; }
.chart .frame { fill: none; stroke: #333; stroke-width: 1; }
hr { width: 100%; border: 0; height: 1px; background: #35363d; margin: 65px 0 50px; }
.caption { font-size: 16.600px; line-height: 24px; color: #8e8f93; margin: 23px 0 29px; white-space: nowrap; }
.metrics { width: 100%; display: grid; grid-template-columns: repeat(3, 1fr); gap: 21px; }
.label { font-size: 16.600px; line-height: 24px; white-space: nowrap; }
.value { font-size: 42.500px; line-height: 56px; height: 56px; margin-top: 4px; white-space: nowrap; }
.value i { font: 48px/1px "DejaVu Sans", sans-serif; margin-left: -2px; }
.hint { font-size: 19.100px; line-height: 28px; margin: 2px 0 25px; white-space: nowrap; }
.map { position: relative; width: 1067px; height: 800px; overflow: hidden; }
.tiles { display: block; width: 1067px; height: 800px; }
.tiles path { vector-effect: non-scaling-stroke; stroke-linejoin: round; }
.wood { fill: #c3d9b5; }
.land { fill: #f2efe9; filter: url(#rough); }
.sparse { fill: #d9e3cd; filter: url(#rough); }
.pale { fill: #cfe2ba; }
.scrub { fill: #dfe9c8; filter: url(#rough); }
.rough { filter: url(#rough); }
.specks { fill: none; stroke: #eef0e2; stroke-width: 1.800; opacity: .75; filter: url(#rough); }
.specks.faint { stroke: #dbe6cf; }
.valley { fill: none; stroke: #d8ebbf; stroke-width: 4; }
.lake { fill: #b1d2dd; }
.river { fill: none; stroke: #b9d7e0; stroke-width: 1.600; }
.river.wide { stroke-width: 4; stroke: #b3d3dd; }
.stream { fill: none; stroke: #cbe0e4; stroke-width: 1; }
.road { fill: none; stroke: #f3c5b2; stroke-width: 1.200; }
.state { fill: none; stroke: #a795ad; stroke-width: 1.200; opacity: .8; }
.country { fill: none; stroke: #9d8ca6; stroke-width: 2.400; opacity: .85; }
.grid path { stroke: #d8d5d8; stroke-width: .6; opacity: .5; }
.aoi { fill: #3388ff; fill-opacity: .2; stroke: #3c82ee; stroke-opacity: .55; stroke-width: 5; stroke-linejoin: round; }
#labels text { font-family: "Noto Sans", sans-serif; font-size: 13px; fill: #44494a; stroke: #fff; stroke-opacity: .6; stroke-width: 2.500px; paint-order: stroke; text-anchor: middle; stroke-linejoin: round; }
#labels .region { font-style: italic; font-size: 13.300px; fill: #86658f; }
#labels .big { font-size: 15.700px; }
#labels .nation { font-size: 17px; fill: #83618f; }
#labels circle { fill: #fff; stroke: #666; stroke-width: 1; }
.controls { position: absolute; left: 15px; top: 15px; }
.bar { width: 40px; background: #fff; border-radius: 3px; box-shadow: 0 0 0 1.500px rgba(70, 90, 60, .45); }
.bar button { width: 40px; height: 40px; background: none; border-bottom: 1px solid #ccc; }
.bar button:last-child { border-bottom: 0; }
.bar svg { display: block; width: 40px; height: 40px; fill: none; }
.draw { margin-top: 18px; }
.edit { margin-top: 19px; }
.search { margin-top: 17px; }
.k3 { stroke: #000; stroke-width: 2.600; }
.g1 { stroke: #464646; stroke-width: 1.300; }
.g2 { stroke: #464646; stroke-width: 1.800; }
.g2.b { stroke-width: 2; }
.gf { fill: #464646; }
.s1 { stroke: #000; stroke-width: 2.600; }
.s2 { stroke: #000; stroke-width: 4; stroke-linecap: round; }
.attribution { position: absolute; right: 0; bottom: 0; height: 22px; padding: 0 7px; display: flex; align-items: center; gap: 5px; background: rgba(255, 255, 255, .8); font: 16.200px/23px "Liberation Sans", sans-serif; color: #333; white-space: nowrap; }
.attribution svg { width: 16px; height: 11px; }
.attribution a { color: #2a78b0; }
h3.dl { margin: 66px 0 21px; }
.download { width: 234px; height: 53px; border: 1px solid #41444c; border-radius: 10px; background: #131720; font-size: 19.050px; line-height: 49px; white-space: nowrap; }
.ndvi-m .value { margin-top: 5px; }
.cap-ndvi { margin: 24px 0 28px; }
.alert { width: 100%; height: 74px; margin-top: 31px; border-radius: 10px; background: #22382b; color: #dffde9; padding: 22px 21px; font-size: 19px; line-height: 28px; }
.area { height: 32px; line-height: 32px; margin: 35px 0 24px; font-size: 22px; display: flex; align-items: center; white-space: nowrap; gap: 5px; }
.area svg { width: 26px; height: 26px; }
.area span { font-size: 22.700px; }
h3.risk { margin-bottom: 24px; }
.level { font-size: 18.800px; line-height: 28px; display: flex; align-items: center; gap: 5px; white-space: nowrap; }
.level b { letter-spacing: -.15px; }
.dot { width: 23px; height: 23px; border-radius: 50%; background: linear-gradient(#7fe05a, #4fb32f 45%, #3c9022); }
```

FILE: app.js
```js
const NS = 'http://www.w3.org/2000/svg';
function add(parent, tag, attrs, text) {
  const el = document.createElementNS(NS, tag);
  for (const k in attrs) el.setAttribute(k, attrs[k]);
  if (text !== undefined) el.textContent = text;
  parent.appendChild(el);
  return el;
}
const pairs = s => s.trim().split(/\s+/).map(p => p.split(',').map(Number));

function drawChart(id, c) {
  const svg = document.getElementById(id);
  const X = x => +((x - c.origin[0]) / c.scale[0]).toFixed(2);
  const Y = y => +((y - c.origin[1]) / c.scale[1]).toFixed(2);
  const [l, t, r, b] = c.frame;
  for (const [y0, y1, color, a] of c.bands || [])
    add(svg, 'rect', { x: X(l), y: Y(y0), width: X(r) - X(l), height: Y(y1) - Y(y0), fill: color, 'fill-opacity': a, stroke: color, 'stroke-opacity': a });
  c.xt.forEach(([x, name]) => {
    add(svg, 'line', { class: 'gridline', x1: X(x), x2: X(x), y1: Y(b), y2: Y(t) });
    add(svg, 'line', { x1: X(x), x2: X(x), y1: Y(b), y2: Y(b) + 4, stroke: '#222' });
    add(svg, 'text', { class: 'tick', 'text-anchor': 'middle', transform: `translate(${X(x) + (c.shift || 0) + 3} ${Y(c.xlab) + 3}) rotate(-45)` }, name);
  });
  c.yt.forEach(([y, name]) => {
    add(svg, 'line', { class: 'gridline', x1: X(l), x2: X(r), y1: Y(y), y2: Y(y) });
    add(svg, 'line', { x1: X(l) - 4, x2: X(l), y1: Y(y), y2: Y(y), stroke: '#222' });
    add(svg, 'text', { class: 'tick', 'text-anchor': 'end', x: X(c.ylab), y: Y(y) + 4.500 }, name);
  });
  const pts = c.points;
  add(svg, 'polyline', { points: pts.map(p => X(p[0]) + ',' + Y(p[1])).join(' '), fill: 'none', stroke: c.color, 'stroke-width': c.lw || 1.700, 'stroke-linejoin': 'round' });
  pts.forEach((p, i) => {
    add(svg, 'circle', { cx: X(p[0]), cy: Y(p[1]), r: 4, fill: c.color });
    const q = pts[i + 1];
    if (!c.daily || !q) return;
    const n = Math.round((q[0] - p[0]) / 2.443);
    for (let k = 1; k < n; k++)
      add(svg, 'circle', { cx: X(p[0] + (q[0] - p[0]) * k / n), cy: Y(p[1] + (q[1] - p[1]) * k / n), r: 4, fill: c.color });
  });
  add(svg, 'rect', { class: 'frame', x: X(l), y: Y(t), width: X(r) - X(l), height: Y(b) - Y(t) });
  add(svg, 'text', { 'text-anchor': 'middle', x: X((l + r) / 2), y: Y(c.titleY) - .5, 'font-size': c.titleSize }, c.title);
  add(svg, 'text', { class: 'axis', 'text-anchor': 'middle', x: X((l + r) / 2), y: Y(c.dateY) }, 'Date');
  add(svg, 'text', { class: 'axis', 'text-anchor': 'middle', transform: `translate(${X(c.yname[0]) + 5} ${Y(c.yname[1])}) rotate(-90)` }, c.yname[2]);
}
const months = ['2024-01', '2024-03', '2024-05', '2024-07', '2024-09', '2024-11', '2025-01', '2025-03', '2025-05'];
const xt = xs => xs.map((x, i) => [x, months[i]]);

drawChart('rain', {
  origin: [48, 217], scale: [2.529, 2.529], frame: [175, 333, 1497, 1318], color: '#0000ff',
  xt: xt([234, 405, 579, 752, 929, 1103, 1277, 1445]), xlab: 1395, ylab: 153,
  yt: [[401, '60'], [553, '50'], [705, '40'], [857, '30'], [1009, '20'], [1161, '10'], [1314, '0']],
  title: 'CHIRPS Rainfall Data', titleSize: 18.800, titleY: 275, dateY: 1487, yname: [83, 826, 'Rainfall (mm)'],
  points: pairs(`235,897 250,1141 264,1142 278,1257 293,1138 306,879 324,1057 337,1072 352,1065 367,1075 380,859 395,1202 406,1098 421,902 435,951 449,1099 463,897 477,862 494,1000 509,1072 523,821 537,1017 551,1106 565,933 579,937 594,1117 608,1041 622,1018 637,991 651,898 668,979 682,1078 697,1057 710,1115 725,994 739,1207 753,921 768,587 782,1009 796,833 810,1061 825,1028 842,884 856,1038 870,838 884,850 899,876 913,1004 930,666 944,705 959,1017 973,957 986,990 1001,923 1015,788 1029,692 1044,487 1058,797 1073,1063 1086,379 1103,1038 1117,673 1132,927 1146,942 1160,930 1175,1063 1189,1103 1203,1068 1217,921 1232,857 1245,986 1261,1024 1277,1273 1291,900 1306,1219 1320,883 1334,1090 1349,1023 1366,1138 1380,933 1394,944 1409,1047 1423,1050 1436,1232`)
});
drawChart('soil', {
  origin: [48, 323], scale: [2.529, 2.412], frame: [200, 431, 1498, 1355], color: '#0000ff', daily: true, lw: 1.500,
  xt: xt([259, 406, 554, 703, 855, 1005, 1153, 1298, 1446]), xlab: 1425, ylab: 180, shift: -1,
  yt: [[519, '0.40'], [682, '0.35'], [846, '0.30'], [1009, '0.25'], [1173, '0.20'], [1336, '0.15']],
  title: 'ERA5 Soil Moisture', titleSize: 18.400, titleY: 377, dateY: 1512, yname: [83, 894, 'Soil Moisture (m³/m³)'],
  points: pairs(`259,1009 262,975 267,965 270,1000 277,1009 279,1050 285,1095 292,1120 297,1165 303,1200 308,1230 316,1250 319,1178 321,727 323,750 326,787 328,888 330,958 333,1010 335,1045 341,1073 345,1135 350,1175 353,1075 355,1014 358,1056 362,1130 366,1160 372,1196 375,1105 377,1040 380,1087 384,1150 389,1183 392,965 394,840 396,903 399,982 402,1038 404,1073 408,1127 412,1180 416,1200 421,1213 424,891 426,830 429,939 433,1015 437,1070 441,1125 445,1160 447,1186 450,1113 453,884 455,949 459,1005 461,1062 465,1093 470,1020 475,1093 478,1130 480,1145 483,1115 488,1146 491,912 494,888 497,935 502,1040 505,1015 509,955 511,775 514,863 516,951 520,1020 525,1058 530,995 533,1073 539,1000 543,1090 546,1118 548,1150 550,1176 553,1195 557,1211 561,1178 565,1205 570,1230 575,1113 577,1049 580,1100 584,1142 588,1185 591,1177 594,1205 598,1225 601,1245 606,1257 609,1205 613,1000 616,893 619,914 622,979 625,1035 630,1045 634,1070 637,1098 643,1034 646,1072 650,1113 655,1093 659,1140 663,1165 668,1185 675,1215 682,1240 690,1262 696,1280 703,1300 711,1313 718,1305 722,1297 724,1269 727,1213 730,1183 733,1142 736,1155 740,1185 745,1223 748,1076 752,1055 755,989 758,901 761,935 765,949 767,869 770,935 773,1008 777,970 780,1025 784,820 787,885 789,860 792,905 795,965 798,948 800,812 802,846 804,760 807,790 809,820 811,750 815,791 818,616 821,664 824,770 828,618 831,690 835,760 840,705 843,790 846,810 849,760 853,609 856,714 858,774 861,568 866,650 870,680 875,740 877,800 880,589 883,657 886,737 890,846 894,876 897,747 899,556 902,630 905,549 908,609 911,666 913,736 916,790 920,820 924,863 929,924 931,719 934,581 937,672 940,635 943,563 946,650 950,607 953,665 957,694 960,500 964,535 967,587 970,640 974,665 978,582 982,607 986,714 990,650 998,728 1002,628 1005,700 1010,700 1014,645 1020,670 1024,474 1027,511 1030,565 1033,634 1037,717 1040,575 1042,614 1046,700 1052,680 1057,735 1062,738 1067,600 1071,655 1074,755 1079,765 1083,730 1087,808 1090,735 1094,850 1097,898 1101,903 1105,653 1108,700 1111,820 1115,760 1118,785 1120,829 1122,862 1127,915 1132,970 1136,905 1141,930 1143,1000 1147,1040 1150,1100 1153,1127 1156,1150 1160,1085 1165,1120 1170,1018 1175,1050 1178,1103 1182,1134 1185,1178 1190,1215 1196,1223 1203,1205 1205,1135 1207,722 1210,782 1213,934 1219,824 1222,909 1225,967 1229,1040 1234,1080 1241,1133 1244,1000 1248,1022 1251,1080 1257,1123 1259,987 1262,548 1264,661 1267,740 1270,719 1273,818 1276,868 1279,789 1283,887 1286,945 1289,835 1291,598 1293,741 1296,823 1298,859 1301,908 1303,961 1306,1005 1314,1015 1318,943 1322,1052 1325,1087 1328,1083 1332,931 1335,990 1338,1034 1340,803 1342,709 1345,828 1347,849 1349,623 1352,677 1355,757 1359,907 1363,890 1369,875 1371,632 1374,690 1377,770 1379,826 1383,640 1386,705 1389,795 1394,775 1398,661 1401,708 1404,803 1406,867 1409,880 1413,900 1415,797 1418,690 1420,777 1423,840 1427,880 1430,921 1433,845 1436,830 1438,900 1440,815`)
});
drawChart('ndvi', {
  origin: [53, 225], scale: [2.529, 2.613], frame: [227, 341, 1506, 1324], color: '#2f7d20',
  xt: xt([285, 440, 597, 755, 915, 1073, 1230, 1383]), xlab: 1400, ylab: 206,
  yt: [[385, '1.00'], [497, '0.75'], [609, '0.50'], [721, '0.25'], [832, '0.00'], [944, '−0.25'], [1056, '−0.50'], [1168, '−0.75'], [1280, '−1.00']],
  bands: [[385, 654, '#1a7a1a', .2], [654, 743, '#9aca3c', .2], [743, 832, '#ffff00', .2], [832, 1280, '#8b2020', .18]],
  title: 'Vegetation Health Index (NDVI)', titleSize: 18.200, titleY: 281, dateY: 1492, yname: [91, 838, 'NDVI'],
  points: pairs(`285,632 297,632 402,632 414,629 454,615 479,612 479,618 492,642 608,611 622,629 699,642 711,611 711,623 737,629 737,652 750,686 763,636 763,688 814,674 814,681 867,663 956,638 1150,618 1176,621 1241,630 1248,726 1292,629 1357,628 1370,612 1370,618 1435,617 1447,622 1447,625`)
});

/* Place names: kind, text position, text, marker position. Grouped by map tile. */
const tiles = {
  nw: { o: [34, 423], at: [0, 0] }, ne: { o: [0, 93], at: [528, 0] },
  sw: { o: [34, 0], at: [0, 329] }, se: { o: [0, 0], at: [528, 329] }
};
const places = {
  nw: ['town|316,561|Bertoua|316,514', 'region|684,512|Mambéré-', 'region|686,560|Kadéï', 'region|971,588|Lobaye', 'big|1149,530|Bangui|1149,555',
    'town|1157,669|Libenge|1157,687', 'region|340,661|Est', 'town|429,725|Yokadouma|548,711', 'town|373,789|Lomié|305,774', 'region|728,752|Sangha-', 'region|728,799|Mbaéré',
    'region|1298,759|Sud-Ubangi', 'town|149,830|Sangmélima', 'town|576,962|Mouloundou|577,979', 'region|644,1114|Sangha', 'region|943,1094|Likouala', 'town|1355,1112|Basankusu|1355,1130',
    'region|466,1322|Cuvette-', 'region|466,1370|Ouest', 'town|985,1356|Mbandaka|1093,1341', 'region|1244,1356|Équateur', 'town|1537,1386|Boende|1537,1402', 'region|205,1277|é-', 'region|196,1324|o', 'region|46,510|re', 'town|202,618|g-|227,622', 'town|201,667|g', 'town|55,1415|ué'],
  ne: ['town|76,216|Mobaye|78,232', 'region|110,304|Nord-Ubangi', 'town|377,286|Yakoma|290,271', 'town|588,281|Dugbia|588,296', 'town|538,392|Likati|537,408', 'region|763,367|Bas-Uele', 'region|1370,427|Haut-Uele',
    'town|680,496|Buta|679,512', 'town|1171,559|Isiro|1171,516', 'region|1415,651|Ituri', 'region|77,666|Mongala', 'town|295,669|Bumba|293,623', 'town|490,780|Basoko|488,796', 'town|761,910|Kisangani|761,924', 'region|834,997|Tshopo',
    'town|1486,914|Beni|1485,931', 'town|1455,1043|Butembo|1455,995', 'region|1370,1137|Nord-Kivu', 'region|165,1118|Tshuapa'],
  sw: ['town|316,44|Okondja|316,61', 'nation|713,90|Congo', 'town|983,108|Liranga|981,61', 'region|340,181|Haut-Ogooué', 'town|299,282|Franceville|297,237', 'region|615,321|Plateaux', 'region|1152,418|Mai-Ndombe',
    'region|307,514|Lékoumou', 'region|72,567|Niari', 'town|943,529|Bandundu|943,544', 'region|560,650|Pool', 'town|72,720|Dolisie|145,705', 'town|293,745|Madingou|294,700', 'big|592,784|Kinshasa|593,728', 'town|1488,777|Ilebo|1488,728',
    'town|886,863|Kenge|884,816', 'region|1186,831|Kwilu', 'town|1318,893|Idiofa|1316,844', 'big|82,866|Noire', 'region|436,899|Kongo-Central', 'town|76,937|Cabinda|63,951', 'town|278,987|Matadi|279,1005', 'region|1010,1084|Kwango',
    'town|410,1130|M\'banza|409,1084', 'town|410,1178|Congo', 'region|256,1205|Zaire', 'region|605,1258|Uíge', 'big|548,1385|Uíge|547,1328', 'town|1530,1097|Tshikapa|1522,1112'],
  se: ['region|67,842|Kasaï', 'region|888,409|Maniema', 'town|882,524|Kindu|883,476', 'town|1382,441|Bukavu|1382,396', 'region|1264,556|Sud-Kivu', 'region|462,643|Sankuru', 'town|1481,647|Rumonge|1482,663', 'town|1535,739|Makamba',
    'town|1513,876|Kigoma|1515,828', 'town|1066,905|Kongolo|1067,920', 'big|1440,1004|Kalemie|1440,1025', 'region|264,1059|Kasaï-Central', 'region|666,1123|Lomami', 'town|978,1187|Ankoro|1055,1173', 'region|1235,1181|Tanganyika',
    'town|1133,1257|Manono|1133,1272', 'town|464,1263|Mwene-|462,1220', 'town|462,1311|Ditu', 'town|682,1326|Kanyama|586,1312', 'nation|1483,310|Rwanda', 'nation|1478,573|Burundi']
};
const layer = document.getElementById('labels');
for (const key in places) {
  const { o, at } = tiles[key];
  const px = s => { const [x, y] = s.split(',').map(Number); return [at[0] + (x - o[0]) / 2.800, at[1] + (y - o[1]) / 3]; };
  for (const row of places[key]) {
    const [kind, pos, name, mark] = row.split('|');
    if (mark) {
      const [cx, cy] = px(mark);
      add(layer, 'circle', { cx, cy, r: kind === 'big' ? 3.500 : 2.400 });
      if (name === 'Kinshasa' || name === 'Bangui') add(layer, 'circle', { cx, cy, r: .8 });
    }
    const [x, y] = px(pos);
    const t = add(layer, 'text', { x, y, class: kind }, name);
    if (name === 'Rwanda' || name === 'Burundi') t.style.textAnchor = 'start';
  }
}
```
